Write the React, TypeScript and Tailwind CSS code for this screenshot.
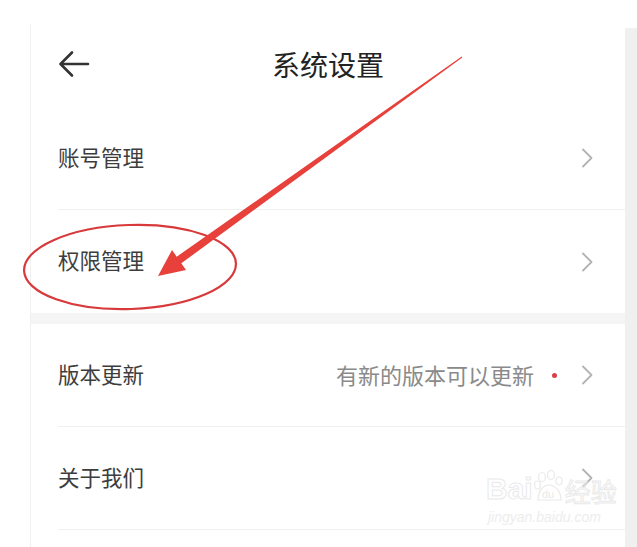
import React from "react";

const font = { fontFamily: '"Noto Sans CJK SC", "Noto Sans", sans-serif' };

function Chevron() {
  return (
    <svg width="13" height="20" viewBox="0 0 13 20" className="shrink-0">
      <path d="M2 1.5 L10.5 10 L2 18.5" fill="none" stroke="#b3b3b3" strokeWidth="1.8" strokeLinecap="round" strokeLinejoin="round" />
    </svg>
  );
}

function Row({ label, right, dot, last }: { label: string; right?: string; dot?: boolean; last?: boolean }) {
  return (
    <div className="pl-[27px]">
      <div className={`h-[103px] flex items-center pr-[31px] ${last ? "" : "border-b border-[#f0f0f0]"}`}>
        <span className="text-[21.5px] text-[#3d3d3d] leading-none -mt-[3px]">{label}</span>
        <div className="flex-1" />
        {right && <span className="text-[22px] text-[#8a8a8a] leading-none mr-[18px] -mt-[3px]">{right}</span>}
        {dot && <span className="w-[5px] h-[5px] rounded-full bg-[#d9414a] mr-[24px]" />}
        <Chevron />
      </div>
    </div>
  );
}

export default function App() {
  return (
    <div className="relative w-[637px] h-[547px] bg-white overflow-hidden" style={font}>
      <div className="flex h-full pt-[24px] pl-[30px]">
        <div className="flex-1 border-l border-[#f0f0f0] flex flex-col">
          <div className="relative h-[83px] flex items-center justify-center">
            <svg width="34" height="30" viewBox="0 0 34 30" className="absolute left-[26px] top-[25px]">
              <path d="M31 15 H4 M15 3.5 L3.5 15 L15 26.5" fill="none" stroke="#333" strokeWidth="2.6" strokeLinecap="round" strokeLinejoin="round" />
            </svg>
            <span className="text-[28px] text-[#222] leading-none -mt-[4px]">系统设置</span>
          </div>
          <Row label="账号管理" />
          <div className="pl-[27px]">
            <div className="h-[103px] flex items-center pr-[31px]">
              <span className="text-[21.5px] text-[#3d3d3d] leading-none -mt-[3px]">权限管理</span>
              <div className="flex-1" />
              <Chevron />
            </div>
          </div>
          <div className="h-[11px] bg-[#f5f5f5]" />
          <Row label="版本更新" right="有新的版本可以更新" dot />
          <Row label="关于我们" />
        </div>
        <div className="w-[12px] mt-[4px] bg-[#f0f0f0]" />
      </div>

      {/* Baidu watermark */}
      <div className="absolute left-[486px] top-[470px] flex flex-col items-start opacity-60">
        <div className="flex items-end leading-none">
          <span className="text-[30px] text-white font-bold" style={{ fontFamily: '"Liberation Sans", sans-serif', WebkitTextStroke: "1px #dcdcdc" }}>Bai</span>
          <svg width="30" height="34" viewBox="0 0 30 34" className="mx-[1px]">
            <g fill="none" stroke="#dcdcdc" strokeWidth="1.2">
              <ellipse cx="8" cy="7" rx="3.5" ry="4.5" />
              <ellipse cx="17" cy="5" rx="3.5" ry="4.5" />
              <ellipse cx="25" cy="11" rx="3.2" ry="4" />
              <ellipse cx="3.5" cy="15" rx="3" ry="4" />
              <path d="M4 30 C4 20 10 15 15 15 C21 15 27 21 27 30 Z" />
            </g>
            <text x="8" y="28" fontSize="11" fill="#dcdcdc" fontFamily="Liberation Sans, sans-serif">du</text>
          </svg>
          <span className="text-[26px] text-white" style={{ WebkitTextStroke: "1px #dcdcdc" }}>经验</span>
        </div>
        <span className="text-[14px] italic text-[#e2e2e2] leading-none mt-[6px] ml-[2px]" style={{ fontFamily: '"Liberation Sans", sans-serif' }}>jingyan.baidu.com</span>
      </div>

      {/* Annotations */}
      <svg width="637" height="547" viewBox="0 0 637 547" className="absolute inset-0 pointer-events-none">
        <ellipse cx="130" cy="267" rx="106" ry="42" fill="none" stroke="#d8393b" strokeWidth="2.2" transform="rotate(-2 130 267)" />
        <polygon
          points="462.3,57.4 181.3,263.3 186,270 158,276 172,250 176.7,256.7 461.7,56.6"
          fill="#e8403a"
        />
      </svg>
    </div>
  );
}
